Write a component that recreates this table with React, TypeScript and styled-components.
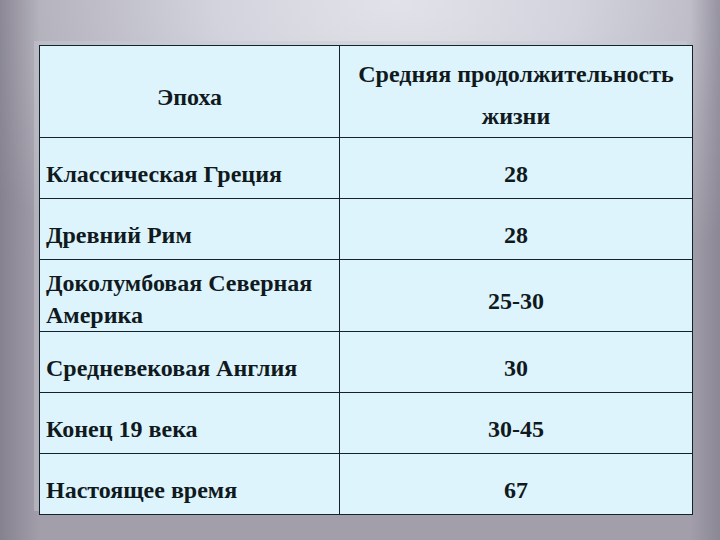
import React from "react";
import styled, { createGlobalStyle } from "styled-components";

const Global = createGlobalStyle`
  html, body { margin: 0; padding: 0; }
  body { width: 720px; height: 540px; overflow: hidden; font-family: "Liberation Serif", "Times New Roman", serif; }
`;

const Slide = styled.div`
  width: 720px;
  height: 540px;
  box-sizing: border-box;
  padding: 45px 0 0 39px;
  background:
    linear-gradient(to right, rgba(110,106,120,0.55) 0px, rgba(110,106,120,0) 40px),
    linear-gradient(to left, rgba(120,116,130,0.55) 0px, rgba(120,116,130,0) 30px),
    radial-gradient(ellipse 520px 300px at 55% 0%, #e2e3ea 0%, #d2d3dc 35%, #b4b2bd 70%, #a29fab 100%),
    #a29fab;
`;

const Frame = styled.div`
  width: 653px;
  box-shadow: -5px -4px 0 0 rgba(200, 202, 210, 0.45);
`;

const Table = styled.table`
  width: 653px;
  border-collapse: collapse;
  table-layout: fixed;
  background: #def4fc;
  color: #101a1e;
  font-family: "Liberation Serif", "Times New Roman", serif;
  font-weight: bold;
  font-size: 24px;
`;

const Row = styled.tr<{ $h: number }>`
  height: ${(p) => p.$h}px;
`;

const Cell = styled.td<{ $center?: boolean; $lh?: number; $pt?: number }>`
  border: 1.5px solid #14232a;
  padding: ${(p) => p.$pt ?? 11}px 6px 0;
  vertical-align: middle;
  font-family: "Liberation Serif", "Times New Roman", serif;
  font-weight: bold;
  font-size: 24px;
  text-align: ${(p) => (p.$center ? "center" : "left")};
  line-height: ${(p) => p.$lh ?? 30}px;
`;

const rows: { era: string; value: string; h: number; lh?: number; pt?: number }[] = [
  { era: "Классическая Греция", value: "28", h: 61 },
  { era: "Древний Рим", value: "28", h: 61 },
  { era: "Доколумбовая Северная Америка", value: "25-30", h: 71, lh: 32, pt: 7 },
  { era: "Средневековая Англия", value: "30", h: 61 },
  { era: "Конец 19 века", value: "30-45", h: 61 },
  { era: "Настоящее время", value: "67", h: 61 },
];

export default function App() {
  return (
    <>
      <Global />
      <Slide>
        <Frame>
          <Table>
            <colgroup>
              <col style={{ width: 300 }} />
              <col style={{ width: 353 }} />
            </colgroup>
            <tbody>
              <Row $h={91}>
                <Cell $center>Эпоха</Cell>
                <Cell $center $lh={42} $pt={7}>
                  Средняя продолжительность жизни
                </Cell>
              </Row>
              {rows.map((r) => (
                <Row key={r.era} $h={r.h}>
                  <Cell $lh={r.lh} $pt={r.pt}>{r.era}</Cell>
                  <Cell $center>{r.value}</Cell>
                </Row>
              ))}
            </tbody>
          </Table>
        </Frame>
      </Slide>
    </>
  );
}
